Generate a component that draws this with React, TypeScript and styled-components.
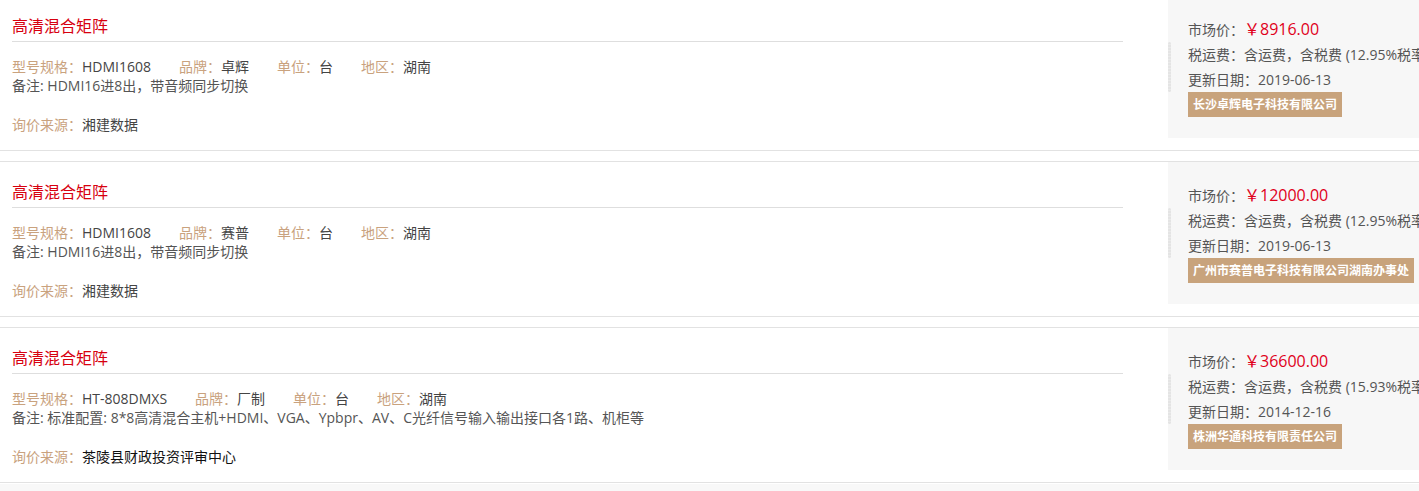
import React from "react";
import styled, { createGlobalStyle } from "styled-components";

const GlobalStyle = createGlobalStyle`
  html, body {
    margin: 0;
    padding: 0;
    background: #ffffff;
    overflow: hidden;
  }
  body {
    font-family: "Open Sans", "Noto Sans CJK SC", "Noto Sans", sans-serif;
    font-size: 14px;
    color: #333;
  }
`;

const List = styled.div`
  margin-top: -5px;
  width: 100%;
  overflow: hidden;
`;

const Item = styled.div`
  display: flex;
  height: 154px;
  border-top: 1px solid #e2e2e2;
  border-bottom: 1px solid #e2e2e2;
  margin-bottom: 10px;
`;

const Main = styled.div`
  flex: 0 0 1111px;
  margin-left: 12px;
`;

const Title = styled.h3`
  margin: 0;
  padding: 19px 0 4px;
  font-size: 16px;
  line-height: 22px;
  font-weight: normal;
  color: #d7000f;
  border-bottom: 1px solid #dedede;
`;

const SpecRow = styled.div`
  display: flex;
  margin-top: 15px;
  line-height: 19px;
  gap: 28px;
  white-space: nowrap;
`;

const Field = styled.span`
  display: inline-flex;
`;

const Label = styled.span`
  color: #c9a27e;
`;

const Value = styled.span<{ $dark?: boolean }>`
  color: ${(p) => (p.$dark ? "#111" : "#444")};
`;

const Remark = styled.div`
  line-height: 19px;
  color: #555;
  white-space: nowrap;
`;

const Source = styled.div`
  margin-top: 20px;
  line-height: 19px;
`;

const Panel = styled.div`
  flex: 1 1 auto;
  min-width: 0;
  margin-left: 45px;
  height: 142px;
  background: #f7f7f7;
  display: flex;
  align-items: center;
  overflow: hidden;
  white-space: nowrap;
`;

const Handle = styled.div`
  flex: 0 0 3px;
  height: 50px;
  border-radius: 2px;
  background: repeating-linear-gradient(
    to bottom,
    #e4e4e4 0px,
    #e4e4e4 2px,
    #ebebeb 2px,
    #ebebeb 3px
  );
`;

const PanelBody = styled.div`
  align-self: flex-start;
  padding-top: 21px;
  margin-left: 17px;
  color: #555;
`;

const PanelLine = styled.div`
  line-height: 25px;
`;

const Price = styled.span`
  color: #e0001a;
  font-size: 16px;
`;

const Company = styled.span`
  display: inline-block;
  margin-top: 0;
  padding: 0 5px;
  height: 25px;
  line-height: 25px;
  background: #c8a37c;
  color: #fff;
  font-size: 12px;
  font-weight: bold;
`;

const Footer = styled.div`
  height: 20px;
  margin-top: -9px;
  background: #f8f8f8;
`;

type Row = {
  model: string;
  brand: string;
  unit: string;
  region: string;
  remark: string;
  source: string;
  sourceDark?: boolean;
  price: string;
  tax: string;
  date: string;
  company: string;
};

const rows: Row[] = [
  {
    model: "HDMI1608",
    brand: "卓辉",
    unit: "台",
    region: "湖南",
    remark: "备注: HDMI16进8出，带音频同步切换",
    source: "湘建数据",
    price: "￥8916.00",
    tax: "含运费，含税费 (12.95%税率)",
    date: "2019-06-13",
    company: "长沙卓辉电子科技有限公司",
  },
  {
    model: "HDMI1608",
    brand: "赛普",
    unit: "台",
    region: "湖南",
    remark: "备注: HDMI16进8出，带音频同步切换",
    source: "湘建数据",
    price: "￥12000.00",
    tax: "含运费，含税费 (12.95%税率)",
    date: "2019-06-13",
    company: "广州市赛普电子科技有限公司湖南办事处",
  },
  {
    model: "HT-808DMXS",
    brand: "厂制",
    unit: "台",
    region: "湖南",
    remark:
      "备注: 标准配置: 8*8高清混合主机+HDMI、VGA、Ypbpr、AV、C光纤信号输入输出接口各1路、机柜等",
    source: "茶陵县财政投资评审中心",
    sourceDark: true,
    price: "￥36600.00",
    tax: "含运费，含税费 (15.93%税率)",
    date: "2014-12-16",
    company: "株洲华通科技有限责任公司",
  },
];

export default function App() {
  return (
    <>
      <GlobalStyle />
      <List>
        {rows.map((r, i) => (
          <Item key={i}>
            <Main>
              <Title>高清混合矩阵</Title>
              <SpecRow>
                <Field>
                  <Label>型号规格：</Label>
                  <Value>{r.model}</Value>
                </Field>
                <Field>
                  <Label>品牌：</Label>
                  <Value>{r.brand}</Value>
                </Field>
                <Field>
                  <Label>单位：</Label>
                  <Value>{r.unit}</Value>
                </Field>
                <Field>
                  <Label>地区：</Label>
                  <Value>{r.region}</Value>
                </Field>
              </SpecRow>
              <Remark>{r.remark}</Remark>
              <Source>
                <Label>询价来源：</Label>
                <Value $dark={r.sourceDark}>{r.source}</Value>
              </Source>
            </Main>
            <Panel>
              <Handle />
              <PanelBody>
                <PanelLine>
                  市场价：<Price>{r.price}</Price>
                </PanelLine>
                <PanelLine>税运费：{r.tax}</PanelLine>
                <PanelLine>更新日期：{r.date}</PanelLine>
                <Company>{r.company}</Company>
              </PanelBody>
            </Panel>
          </Item>
        ))}
        <Footer />
      </List>
    </>
  );
}
